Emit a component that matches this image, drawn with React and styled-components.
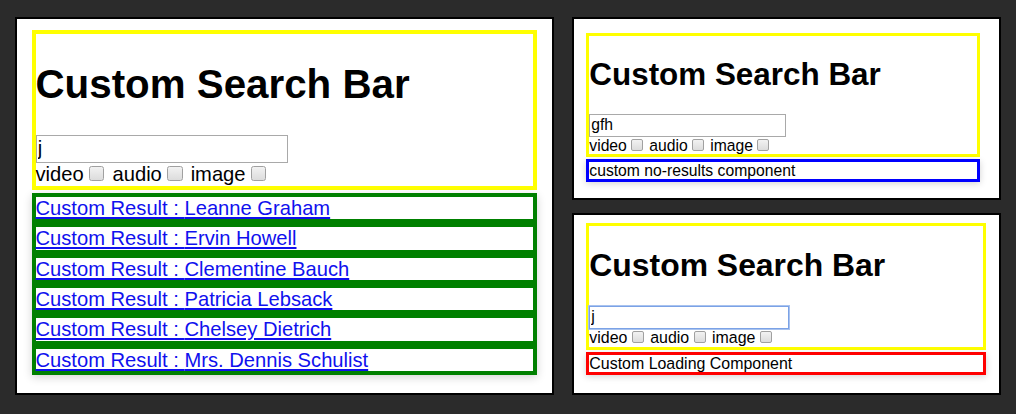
import styled, { createGlobalStyle } from "styled-components";

const users = [
  "Leanne Graham",
  "Ervin Howell",
  "Clementine Bauch",
  "Patricia Lebsack",
  "Chelsey Dietrich",
  "Mrs. Dennis Schulist",
];

const filters = ["video", "audio", "image"];

function SearchDemo({ zoom, query, focused, children }) {
  return (
    <Demo $zoom={zoom}>
      <SearchBox>
        <Title>Custom Search Bar</Title>
        <SearchInput
          type="text"
          defaultValue={query}
          $focused={focused}
          autoFocus={focused}
        />
        <Filters>
          {filters.map((name) => (
            <FilterLabel key={name}>
              {name}
              <Checkbox type="checkbox" />
            </FilterLabel>
          ))}
        </Filters>
      </SearchBox>
      {children}
    </Demo>
  );
}

export default function App() {
  return (
    <>
      <GlobalStyle />
      <Page>
        <Panel $pad="10.5px 0 0 14.5px">
          <SearchDemo zoom={1.26} query="j">
            <ResultList>
              {users.map((name) => (
                <ResultItem key={name}>
                  <ResultLink href="#">Custom Result : {name}</ResultLink>
                </ResultItem>
              ))}
            </ResultList>
          </SearchDemo>
        </Panel>
        <Column>
          <Panel $pad="14px 0 0 12.3px">
            <SearchDemo zoom={0.982} query="gfh">
              <StatusBox $color="#0000ff">custom no-results component</StatusBox>
            </SearchDemo>
          </Panel>
          <Panel $pad="8px 0 0 12.3px">
            <SearchDemo zoom={0.997} query="j" focused>
              <StatusBox $color="#ff0000">Custom Loading Component</StatusBox>
            </SearchDemo>
          </Panel>
        </Column>
      </Page>
    </>
  );
}

const GlobalStyle = createGlobalStyle`
  body {
    margin: 0;
    background: #2b2b2b;
    font-family: "Liberation Sans", Arial, sans-serif;
  }
`;

const Page = styled.div`
  display: grid;
  grid-template-columns: 539px 429px;
  column-gap: 18px;
  padding: 17px 15px 19px;
  height: 414px;
  box-sizing: border-box;
`;

const Column = styled.div`
  display: grid;
  grid-template-rows: 183px 182px;
  row-gap: 13px;
`;

const Panel = styled.div`
  background: #fff;
  border: 2px solid #000;
  box-sizing: border-box;
  padding: ${(p) => p.$pad};
  overflow: hidden;
`;

const Demo = styled.div`
  zoom: ${(p) => p.$zoom};
  width: 401px;
  color: #000;
  font-size: 16px;
`;

const SearchBox = styled.div`
  border: 3.2px solid #ffff00;
`;

const Title = styled.h1`
  font-size: 32px;
  font-weight: bold;
  margin: 21.44px 0;
`;

const SearchInput = styled.input`
  display: block;
  width: 200px;
  height: 23px;
  box-sizing: border-box;
  margin: 0;
  padding: 0 1px;
  font: 16px "Liberation Sans", Arial, sans-serif;
  color: #000;
  caret-color: #000;
  border: 1px solid ${(p) => (p.$focused ? "#7ba2e6" : "#a9a9a9")};
  box-shadow: ${(p) => (p.$focused ? "0 0 0 1px #a9c3ef" : "none")};
  outline: none;
`;

const Filters = styled.div`
  line-height: 18px;
`;

const FilterLabel = styled.label`
  margin-right: 3.4px;
`;

const Checkbox = styled.input`
  appearance: none;
  width: 12px;
  height: 12px;
  margin: 0 3px 0 4.5px;
  vertical-align: baseline;
  border: 1px solid #a0a0a0;
  border-radius: 2px;
  background: linear-gradient(#f2f2f2, #dcdcdc);
  box-sizing: border-box;
`;

const ResultList = styled.ul`
  list-style: none;
  margin: 2px 0 0;
  padding: 0;
  box-shadow: 0 2px 7px rgba(0, 0, 0, 0.18);
`;

const ResultItem = styled.li`
  border: 3.2px solid #008000;
  background: #fff;
  line-height: 17.8px;
`;

const ResultLink = styled.a`
  color: #1010ee;
  text-decoration: underline;
`;

const StatusBox = styled.div`
  margin-top: 2px;
  border: 3.2px solid ${(p) => p.$color};
  line-height: 17.4px;
  box-shadow: 0 2px 7px rgba(0, 0, 0, 0.18);
`;
